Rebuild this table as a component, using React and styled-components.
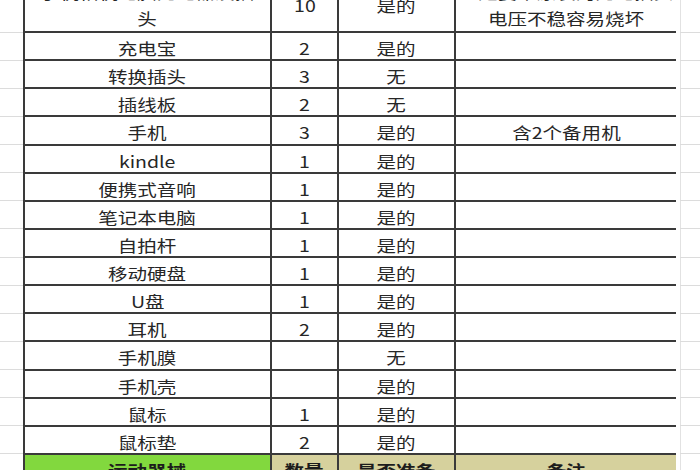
import React from 'react';
import styled, { createGlobalStyle } from 'styled-components';

const GlobalStyle = createGlobalStyle`
  html, body {
    margin: 0;
    padding: 0;
    background: #fff;
  }
  body {
    font-family: "Noto Sans CJK SC", "Noto Sans", sans-serif;
  }
`

const rows = [
  { name: '充电宝', qty: '2', ready: '是的' },
  { name: '转换插头', qty: '3', ready: '无' },
  { name: '插线板', qty: '2', ready: '无' },
  { name: '手机', qty: '3', ready: '是的', note: '含2个备用机' },
  { name: 'kindle', qty: '1', ready: '是的' },
  { name: '便携式音响', qty: '1', ready: '是的' },
  { name: '笔记本电脑', qty: '1', ready: '是的' },
  { name: '自拍杆', qty: '1', ready: '是的' },
  { name: '移动硬盘', qty: '1', ready: '是的' },
  { name: 'U盘', qty: '1', ready: '是的' },
  { name: '耳机', qty: '2', ready: '是的' },
  { name: '手机膜', qty: '', ready: '无' },
  { name: '手机壳', qty: '', ready: '是的' },
  { name: '鼠标', qty: '1', ready: '是的' },
  { name: '鼠标垫', qty: '2', ready: '是的' },
]

function Row({ item }) {
  return (
    <tr>
      <Gutter />
      <Cell><Text>{item.name}</Text></Cell>
      <Cell><Text>{item.qty}</Text></Cell>
      <Cell><Text>{item.ready}</Text></Cell>
      <Cell><Text>{item.note}</Text></Cell>
      <Gutter $right />
    </tr>
  )
}

export default function App() {
  return (
    <Page>
      <GlobalStyle />
      <Sheet>
        <colgroup>
          <col style={{ width: 24 }} />
          <col style={{ width: 247 }} />
          <col style={{ width: 67 }} />
          <col style={{ width: 117 }} />
          <col style={{ width: 223 }} />
          <col style={{ width: 22 }} />
        </colgroup>
        <tbody>
          <TallRow>
            <Gutter />
            <TallCell><Text>手机相机电脑充电器及插<br />头</Text></TallCell>
            <TallCell><Text>10</Text></TallCell>
            <TallCell><Text>是的</Text></TallCell>
            <TallCell><Text>一定要带原装的充电插头<br />电压不稳容易烧坏</Text></TallCell>
            <Gutter $right />
          </TallRow>
          {rows.map((r) => <Row key={r.name} item={r} />)}
          <tr>
            <Gutter />
            <HeadCell $bg="#82d83e"><Text>运动器械</Text></HeadCell>
            <HeadCell $bg="#d6d19d"><Text>数量</Text></HeadCell>
            <HeadCell $bg="#d6d19d"><Text>是否准备</Text></HeadCell>
            <HeadCell $bg="#d6d19d"><Text>备注</Text></HeadCell>
            <Gutter $right />
          </tr>
        </tbody>
      </Sheet>
    </Page>
  )
}

const Page = styled.div`
  width: 700px;
  height: 470px;
  overflow: hidden;
  background: #fff;
`

const Sheet = styled.table`
  table-layout: fixed;
  border-collapse: collapse;
  width: 700px;
  margin-top: -27px;

  tr {
    height: 28.13px;
  }
`

const TallRow = styled.tr`
  && {
    height: 58px;
  }
`

const Cell = styled.td`
  border: 2px solid #3a3a3a;
  padding: 5px 0 0;
  text-align: center;
  vertical-align: middle;
  color: #262626;
  font-size: 16px;
  line-height: 21px;
  white-space: nowrap;
  overflow: hidden;
`

const TallCell = styled(Cell)`
  line-height: 26px;
  padding: 4px 0 0;
`

const HeadCell = styled(Cell)`
  background: ${(p) => p.$bg};
  font-weight: 700;
  color: #1c1c1c;
  vertical-align: top;
`

const Gutter = styled.td`
  padding: 0;
  border-bottom: 1px solid #dcdcdc;
  border-left: ${(p) => (p.$right ? '4px solid #fff' : 'none')};
  box-shadow: ${(p) => (p.$right ? 'inset 1px 0 0 #e2e2e2' : 'none')};
`

const Text = styled.span`
  display: inline-block;
  transform: scaleX(1.22);
  transform-origin: center;
`
